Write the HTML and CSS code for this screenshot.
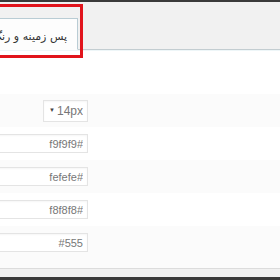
FILE: index.html
```html
<!DOCTYPE html>
<html lang="fa">
<head>
    <meta charset="utf-8">
    <title>تنظیمات رنگ</title>
    <link rel="stylesheet" href="styles.css">
</head>
<body>
    <div class="topbar"></div>
    <div class="tabs">
        <div class="tab">پس زمینه و رنگ‌ها</div>
        <div class="highlight"></div>
    </div>
    <form class="settings" dir="rtl">
        <div class="row">
            <div class="select-wrap">
                <select class="field select">
                    <option>14px</option>
                </select>
            </div>
        </div>
        <div class="row">
            <input class="field text" type="text" value="#f9f9f9">
        </div>
        <div class="row">
            <input class="field text" type="text" value="#fefefe">
        </div>
        <div class="row">
            <input class="field text" type="text" value="#f8f8f8">
        </div>
        <div class="row last">
            <input class="field text" type="text" value="#555">
        </div>
    </form>
    <div class="footer"></div>
    <div class="bottombar"></div>
</body>
</html>
```

FILE: styles.css
```css
body {
    margin: 0;
    width: 280px;
    height: 280px;
    overflow: hidden;
    background-color: #fff;
    font-family: "Liberation Sans", Arial, sans-serif;
}
.topbar {
    height: 2px;
    background-color: #3a3a3a;
}
.tabs {
    position: relative;
    height: 31px;
    padding-top: 16px;
    background-color: #f1f1f1;
    border-bottom: 1px solid #c3cdd1;
    box-shadow: 0 1px 0 #eef6f8;
    display: flex;
    align-items: flex-end;
}
.tab {
    box-sizing: border-box;
    width: 98px;
    height: 32px;
    margin-left: -20px;
    margin-bottom: -1px;
    padding-right: 10px;
    padding-top: 2px;
    direction: rtl;
    text-align: right;
    white-space: nowrap;
    overflow: hidden;
    line-height: 31px;
    font-family: "DejaVu Sans", sans-serif;
    font-size: 11px;
    color: #333;
    background-color: #fdfdfd;
    border: 1px solid #b9ccd4;
    border-bottom-color: #fdfdfd;
}
.highlight {
    position: absolute;
    left: -10px;
    top: 2px;
    box-sizing: border-box;
    width: 93px;
    height: 54px;
    border: 3px solid #e1141c;
}
.settings {
    padding-top: 44px;
}
.row {
    height: 33px;
    display: flex;
    align-items: center;
}
.row:nth-child(odd) {
    background-color: #fbfbfb;
}
.row.last {
    height: 42px;
    align-items: flex-start;
}
.row.last .field {
    margin-top: 7px;
}
.field {
    box-sizing: border-box;
    border: 1px solid #e4e4e4;
    background-color: #fff;
    box-shadow: inset 0 1px 2px rgba(0, 0, 0, 0.04);
    font-family: "Liberation Sans", Arial, sans-serif;
    font-size: 11px;
    color: #777;
}
.text {
    width: 104px;
    height: 19px;
    margin-right: 192px;
    padding: 0 4px;
    text-align: right;
}
.select-wrap {
    position: relative;
    margin-right: 192px;
}
.select {
    appearance: none;
    -webkit-appearance: none;
    width: 45px;
    height: 22px;
    padding: 0 4px 0 0;
    text-align: right;
    font-size: 12px;
}
.select-wrap::after {
    content: "▼";
    position: absolute;
    left: 6px;
    top: 7px;
    font-size: 6px;
    color: #444;
}
.footer {
    height: 8px;
    background-color: #f1f1f1;
    border-top: 1px solid #dcdcdc;
}
.bottombar {
    height: 3px;
    background-color: #3a3a3a;
}
```
